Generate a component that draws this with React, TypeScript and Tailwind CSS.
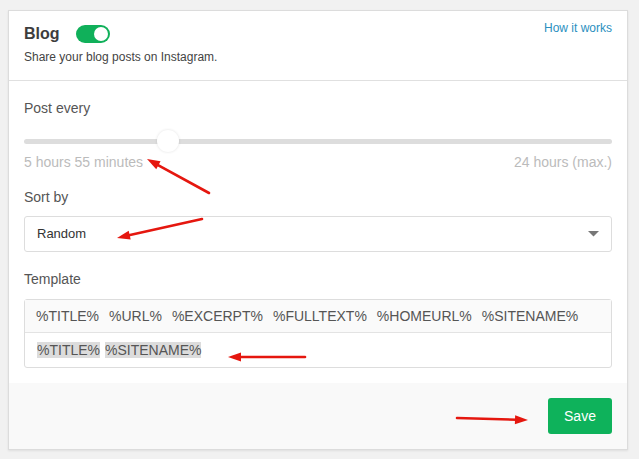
import React from "react";

const ARROWS = [
  { x1: 209, y1: 193, x2: 147, y2: 159 },
  { x1: 202, y1: 219, x2: 117, y2: 238 },
  { x1: 305, y1: 357, x2: 228, y2: 357 },
  { x1: 457, y1: 418, x2: 528, y2: 420 },
];

const TOKENS = ["%TITLE%", "%URL%", "%EXCERPT%", "%FULLTEXT%", "%HOMEURL%", "%SITENAME%"];

function Arrow({ x1, y1, x2, y2 }: { x1: number; y1: number; x2: number; y2: number }) {
  const len = Math.hypot(x2 - x1, y2 - y1);
  const ux = (x2 - x1) / len;
  const uy = (y2 - y1) / len;
  const bx = x2 - ux * 13;
  const by = y2 - uy * 13;
  const px = -uy * 4.5;
  const py = ux * 4.5;
  return (
    <g>
      <line x1={x1} y1={y1} x2={bx + ux * 2} y2={by + uy * 2} stroke="#e5170f" strokeWidth={2.6} strokeLinecap="round" />
      <polygon points={`${x2},${y2} ${bx + px},${by + py} ${bx - px},${by - py}`} fill="#e5170f" />
    </g>
  );
}

export default function App() {
  return (
    <div className="relative w-[639px] h-[459px] bg-[#f1f1f1] pt-[10px] pl-[8px] font-['Liberation_Sans',Arial,sans-serif] text-[#444]">
      <div className="w-[620px] bg-white border border-[#dcdcdc] shadow-[0_1px_2px_rgba(0,0,0,0.08)]">
        {/* header */}
        <div className="flex justify-between items-start border-b border-[#e0e0e0] pl-[15px] pr-[15px] pt-[9px] pb-[15px]">
          <div className="pt-[4px]">
            <div className="flex items-center h-[20px]">
              <span className="text-[16px] font-bold text-[#3d3d3d]">Blog</span>
              <span className="ml-[16px] relative w-[34px] h-[18px] rounded-full bg-[#10b05a]">
                <span className="absolute right-[2px] top-[2px] w-[14px] h-[14px] rounded-full bg-white" />
              </span>
            </div>
            <p className="mt-[5px] text-[12px] leading-[16px] text-[#444]">Share your blog posts on Instagram.</p>
          </div>
          <a className="text-[12px] leading-[16px] text-[#2b8fc0]">How it works</a>
        </div>

        {/* body */}
        <div className="px-[15px] pt-[17px] pb-[15px]">
          <div className="text-[14px] leading-[20px] text-[#555]">Post every</div>
          <div className="relative mt-[12px] h-[22px]">
            <div className="absolute left-0 right-0 top-[9px] h-[5px] rounded-full bg-[#dddddd]" />
            <div className="absolute left-[133px] top-0 w-[22px] h-[22px] rounded-full bg-white shadow-[0_0_3px_rgba(0,0,0,0.12)]" />
          </div>
          <div className="mt-[2px] flex justify-between text-[14px] leading-[16px] text-[#bbbbbb]">
            <span>5 hours 55 minutes</span>
            <span>24 hours (max.)</span>
          </div>

          <div className="mt-[17px] text-[14px] leading-[20px] text-[#555]">Sort by</div>
          <div className="mt-[9px] h-[36px] flex items-center justify-between border border-[#dddddd] rounded-[3px] pl-[12px] pr-[12px]">
            <span className="text-[13px] text-[#333]">Random</span>
            <svg width="11" height="6" viewBox="0 0 11 6">
              <polygon points="0,0 11,0 5.5,5.5" fill="#777" />
            </svg>
          </div>

          <div className="mt-[17px] text-[14px] leading-[20px] text-[#555]">Template</div>
          <div className="mt-[10px] border border-[#dddddd] rounded-[3px]">
            <div className="h-[33px] flex items-center gap-[10px] bg-[#fafafa] border-b border-[#e3e3e3] pl-[11px] text-[14px] text-[#555]">
              {TOKENS.map((t) => (
                <span key={t}>{t}</span>
              ))}
            </div>
            <div className="h-[34px] flex items-center gap-[5px] pl-[12px] text-[14px] text-[#555]">
              <span className="bg-[#dcdcdc] leading-[16px]">%TITLE%</span>
              <span className="bg-[#dcdcdc] leading-[16px]">%SITENAME%</span>
            </div>
          </div>
        </div>

        {/* footer */}
        <div className="bg-[#f9f9f9] h-[66px] flex justify-end items-start pt-[15px] pr-[15px]">
          <button className="w-[64px] h-[36px] rounded-[3px] bg-[#0eb25b] text-white text-[14px]">Save</button>
        </div>
      </div>

      <svg className="absolute inset-0 pointer-events-none" width="639" height="459">
        {ARROWS.map((a, i) => (
          <Arrow key={i} {...a} />
        ))}
      </svg>
    </div>
  );
}
